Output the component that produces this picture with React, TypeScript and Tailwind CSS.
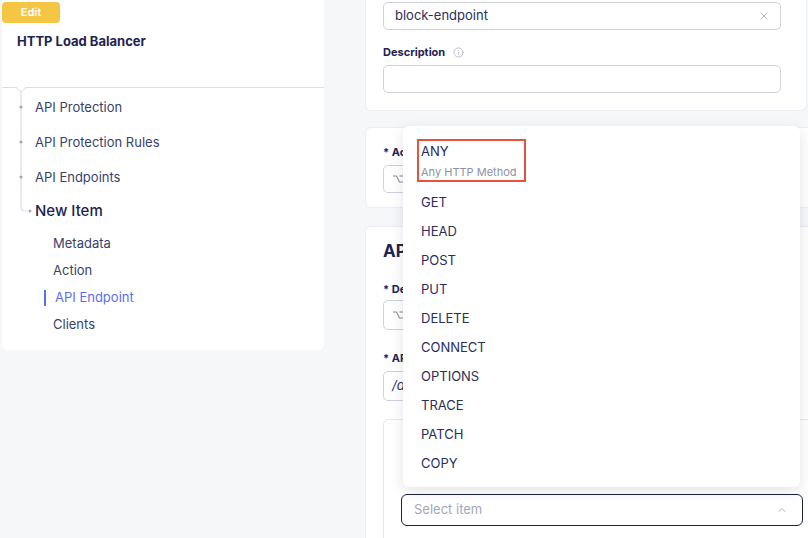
import { ChevronUp, X, Info } from "lucide-react";

const methods = ["GET", "HEAD", "POST", "PUT", "DELETE", "CONNECT", "OPTIONS", "TRACE", "PATCH", "COPY"];

const treeItems = ["API Protection", "API Protection Rules", "API Endpoints"];

const subItems = [
  { title: "Metadata", active: false },
  { title: "Action", active: false },
  { title: "API Endpoint", active: true },
  { title: "Clients", active: false },
];

const RouteIcon = () => (
  <svg width="12" height="10" viewBox="0 0 12 10" fill="none" stroke="#8b8fa5" strokeWidth="1.1">
    <path d="M1 2h3.5l3 6H11" />
    <path d="M7.5 2H11" />
  </svg>
);

const Sidebar = () => (
  <div className="ml-[2px] w-[322px] h-[350px] bg-white rounded-b-md flex flex-col">
    <div className="h-[87px] shrink-0 relative">
      <div className="mt-[2px] w-[58px] h-[21px] rounded-[4px] bg-[#f4c644] flex items-center justify-center text-[11px] font-semibold text-white">
        Edit
      </div>
      <div className="mt-[9px] ml-[15px] text-[13px] font-bold text-[#1f2352]">HTTP Load Balancer</div>
    </div>
    <div className="relative border-t border-[#dcdde9]">
      <div className="absolute left-[15px] -top-[1px] w-[8px] h-[5px] bg-white" />
      <svg className="absolute left-[14px] -top-[1px]" width="10" height="6" viewBox="0 0 10 6" fill="none" stroke="#dcdde9">
        <path d="M0 0.5L5 5L10 0.5" />
      </svg>
      <svg className="absolute left-[17px] top-[1px]" width="16" height="126" viewBox="0 0 16 126" fill="none">
        <path d="M2 3V118Q2 122 6 122H10" stroke="#dcdde9" strokeWidth="1.2" />
        <path d="M10 120L13 122L10 124Z" fill="#a6a9bb" />
        <circle cx="2" cy="18" r="1.6" fill="#a6a9bb" />
        <circle cx="2" cy="53" r="1.6" fill="#a6a9bb" />
        <circle cx="2" cy="88" r="1.6" fill="#a6a9bb" />
      </svg>
      <div className="pl-[33px] pt-[2px] flex flex-col">
        {treeItems.map((t) => (
          <div key={t} className="h-[35px] flex items-center text-[13px] text-[#3a3f6c]">
            {t}
          </div>
        ))}
        <div className="h-[32px] flex items-center text-[15px] font-medium text-[#1e2250]">New Item</div>
        <div className="flex flex-col mt-[3px] pl-[9px]">
          {subItems.map((s) => (
            <div key={s.title} className="h-[27px] flex items-center">
              {s.active ? (
                <div className="flex items-center">
                  <div className="w-[2px] h-[16px] bg-[#5b6df4] mr-[9px]" />
                  <span className="text-[13px] text-[#5b6df4]">{s.title}</span>
                </div>
              ) : (
                <span className="ml-[9px] text-[13px] text-[#3a3f6c]">{s.title}</span>
              )}
            </div>
          ))}
        </div>
      </div>
    </div>
  </div>
);

const Label = ({ text }: { text: string }) => (
  <div className="h-[14px] flex items-center text-[11px] font-bold text-[#1f2352] whitespace-nowrap">{text}</div>
);

const IconInput = ({ mt, h }: { mt: string; h: string }) => (
  <div className={`${mt} ${h} w-[400px] border border-[#cfd1dc] rounded-[5px] bg-white flex items-center pl-[8px]`}>
    <RouteIcon />
  </div>
);

export default function App() {
  return (
    <div className="w-[808px] h-[538px] bg-[#f6f7f9] overflow-hidden relative flex" style={{ fontFamily: "Inter, 'Noto Sans', sans-serif" }}>
      <div className="w-[365px] shrink-0">
        <Sidebar />
      </div>
      <div className="flex flex-col w-[460px] shrink-0">
        <div className="shrink-0 bg-white border border-t-0 border-[#eceef3] rounded-b-md h-[111px] w-[442px] pl-[17px] pt-[2px]">
          <div className="h-[28px] w-[398px] border border-[#cfd1dc] rounded-[5px] flex items-center justify-between pl-[11px] pr-[10px]">
            <span className="text-[13px] text-[#2a2e5c]">block-endpoint</span>
            <X size={12} color="#9a9db0" strokeWidth={1.6} />
          </div>
          <div className="mt-[15px] flex items-center gap-[8px]">
            <Label text="Description" />
            <Info size={11} color="#a3a6b8" strokeWidth={1.5} />
          </div>
          <div className="mt-[6px] h-[28px] w-[398px] border border-[#cfd1dc] rounded-[5px]" />
        </div>
        <div className="shrink-0 mt-[16px] bg-white border border-[#eceef3] rounded-md h-[81px] w-[460px] pl-[17px] pt-[17px]">
          <Label text="* Action" />
          <IconInput mt="mt-[6px]" h="h-[28px]" />
        </div>
        <div className="shrink-0 mt-[18px] bg-white border border-[#eceef3] rounded-md h-[330px] w-[460px] pl-[17px] pt-[14px]">
          <div className="text-[17px] font-bold text-[#1f2352] leading-[20px]">API Endpoint</div>
          <div className="mt-[21px]">
            <Label text="* Description" />
          </div>
          <IconInput mt="mt-[4px]" h="h-[30px]" />
          <div className="mt-[21px]">
            <Label text="* API Endpoint" />
          </div>
          <div className="mt-[6px] h-[30px] w-[400px] border border-[#cfd1dc] rounded-[5px] flex items-center pl-[8px] text-[13px] italic text-[#2a2e5c]">
            /api
          </div>
          <div className="mt-[18px] w-[440px] h-[140px] border border-[#e6e7ee] rounded-md pl-[17px] pt-[74px]">
            <div className="h-[32px] w-[402px] border-[1.5px] border-[#1d2140] rounded-[6px] flex items-center justify-between pl-[12px] pr-[14px]">
              <span className="text-[13px] text-[#a4a7b8]">Select item</span>
              <ChevronUp size={12} color="#a4a7b8" strokeWidth={1.8} />
            </div>
          </div>
        </div>
      </div>

      <div className="absolute left-[403px] top-[126px] w-[397px] h-[361px] bg-white rounded-md shadow-[0_4px_14px_rgba(30,35,80,0.12)] pt-[13px] pl-[14px]">
        <div className="w-[109px] h-[43px] border-2 border-[#e8513a] pl-[2px] flex flex-col justify-center">
          <div className="text-[13px] text-[#23275a] leading-[16px]">ANY</div>
          <div className="mt-[6px] text-[11px] text-[#8d91a8] leading-[14px]">Any HTTP Method</div>
        </div>
        <div className="mt-[6px] flex flex-col">
          {methods.map((m) => (
            <div key={m} className="h-[29px] flex items-center pl-[4px] text-[13px] text-[#2a2e5c]">
              {m}
            </div>
          ))}
        </div>
      </div>
    </div>
  );
}
